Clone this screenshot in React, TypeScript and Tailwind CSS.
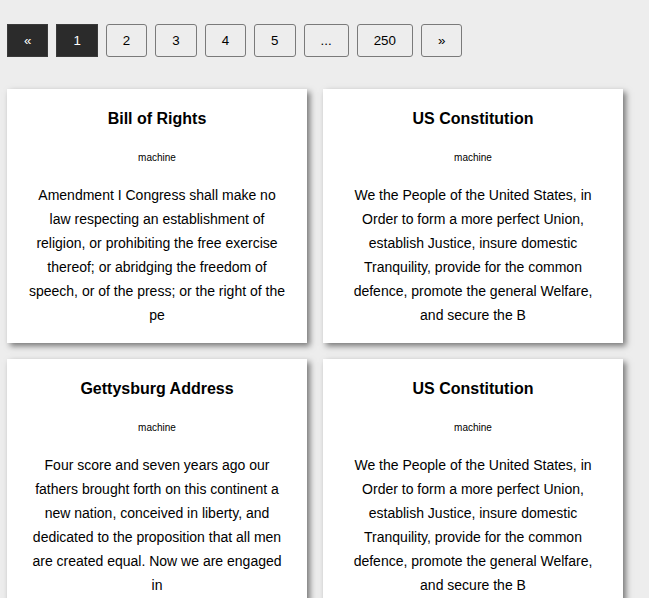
import React from 'react'

const pages = ['«', '1', '2', '3', '4', '5', '...', '250', '»']

// lines kept as in the source layout so the wrap matches
const bill = [
  'Amendment I Congress shall make no',
  'law respecting an establishment of',
  'religion, or prohibiting the free exercise',
  'thereof; or abridging the freedom of',
  'speech, or of the press; or the right of the',
  'pe',
]
const constitution = [
  'We the People of the United States, in',
  'Order to form a more perfect Union,',
  'establish Justice, insure domestic',
  'Tranquility, provide for the common',
  'defence, promote the general Welfare,',
  'and secure the B',
]
const gettysburg = [
  'Four score and seven years ago our',
  'fathers brought forth on this continent a',
  'new nation, conceived in liberty, and',
  'dedicated to the proposition that all men',
  'are created equal. Now we are engaged',
  'in',
]

const docs = [
  { title: 'Bill of Rights', lines: bill },
  { title: 'US Constitution', lines: constitution },
  { title: 'Gettysburg Address', lines: gettysburg },
  { title: 'US Constitution', lines: constitution },
]

function Card({ title, lines }: { title: string; lines: string[] }) {
  return (
    <div className="w-[300px] bg-white px-3 pt-[17px] pb-4 text-center text-black shadow-[3px_3px_6px_rgba(0,0,0,0.5)]">
      <h3 className="text-[16px] font-bold leading-[26px]">{title}</h3>
      <p className="mt-5 text-[10px] leading-[12px]">machine</p>
      <p className="mt-[19px] text-[14px] leading-[24px] whitespace-nowrap">
        {lines.map((l, i) => (
          <span key={i} className="block">
            {l}
          </span>
        ))}
      </p>
    </div>
  )
}

export default function App() {
  return (
    <div
      className="min-h-[598px] bg-[#ededed] px-[7px] pt-6"
      style={{ fontFamily: '"Liberation Sans", Arial, sans-serif' }}
    >
      {/* Pagination */}
      <div className="flex gap-2">
        {pages.map((p, i) => {
          const dark = i < 2
          return (
            <button
              key={i}
              className={
                dark
                  ? 'h-[33px] min-w-[41px] border border-[#3a3a3a] bg-[#2b2b2b] px-4 text-[13.33px] text-white'
                  : 'h-[33px] min-w-[41px] rounded-[3px] border border-[#7a7a7a] bg-[#ededed] px-4 text-[13.33px] text-black'
              }
            >
              {p}
            </button>
          )
        })}
      </div>

      {/* Cards */}
      <div className="mt-8 grid w-[616px] grid-cols-2 gap-4">
        {docs.map((d, i) => (
          <Card key={i} title={d.title} lines={d.lines} />
        ))}
      </div>
    </div>
  )
}
